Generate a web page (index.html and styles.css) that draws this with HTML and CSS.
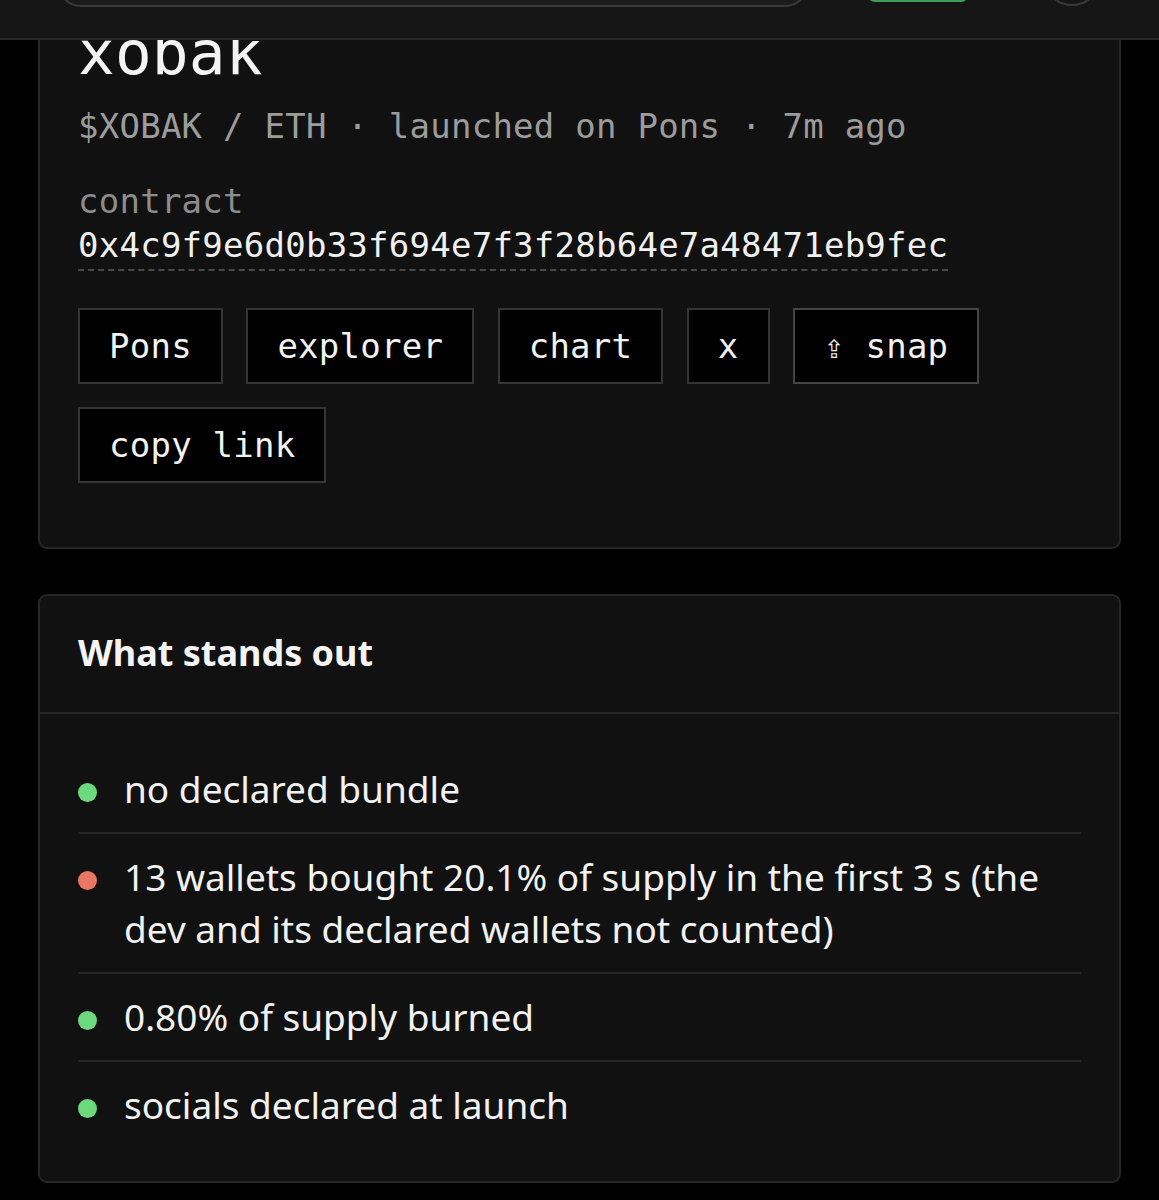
FILE: index.html
```html
<!DOCTYPE html>
<html lang="en">
<head>
<meta charset="utf-8">
<title>xobak</title>
<link rel="stylesheet" href="styles.css">
</head>
<body>
<header class="topbar">
  <div class="topbar-row">
    <div class="search-pill"></div>
    <div class="cta-pill"></div>
    <div class="avatar"></div>
  </div>
</header>

<main class="page">
  <section class="card token-card">
    <h1 class="token-title">xobak</h1>
    <p class="token-meta">$XOBAK / ETH · launched on Pons · 7m ago</p>
    <div class="contract">
      <div class="contract-label">contract</div>
      <div class="contract-addr">0x4c9f9e6d0b33f694e7f3f28b64e7a48471eb9fec</div>
    </div>
    <div class="actions">
      <a class="btn">Pons</a>
      <a class="btn">explorer</a>
      <a class="btn">chart</a>
      <a class="btn">x</a>
      <a class="btn btn-snap">⇪ snap</a>
      <a class="btn">copy link</a>
    </div>
  </section>

  <section class="card notes-card">
    <h2 class="notes-head">What stands out</h2>
    <ul class="notes">
      <li class="note"><span class="dot dot-good"></span><span class="note-text">no declared bundle</span></li>
      <li class="note"><span class="dot dot-bad"></span><span class="note-text">13 wallets bought 20.1% of supply in the first 3 s (the dev and its declared wallets not counted)</span></li>
      <li class="note"><span class="dot dot-good"></span><span class="note-text">0.80% of supply burned</span></li>
      <li class="note"><span class="dot dot-good"></span><span class="note-text">socials declared at launch</span></li>
    </ul>
  </section>
</main>
</body>
</html>
```

FILE: styles.css
```css
* { box-sizing: border-box; }

html, body {
  margin: 0;
  padding: 0;
  background: #000;
}

body {
  color: #f2f2f2;
  font-family: "Noto Sans", "DejaVu Sans", sans-serif;
}

/* ---------- sticky top bar ---------- */
.topbar {
  position: fixed;
  top: 0;
  left: 0;
  right: 0;
  height: 40px;
  background: #161616;
  border-bottom: 2px solid #2a2a2a;
  overflow: hidden;
  z-index: 10;
}

.topbar-row {
  display: flex;
  align-items: flex-end;
  height: 38px;
  padding-left: 57px;
}

.search-pill {
  width: 752px;
  height: 60px;
  margin-bottom: 31px;
  border: 2px solid #3a3a3a;
  border-radius: 24px;
  background: #1b1b1b;
  flex: none;
}

.cta-pill {
  width: 102px;
  height: 40px;
  margin-left: 58px;
  margin-bottom: 36px;
  border: 2px solid #3f9f52;
  border-radius: 8px;
  background: #1f3b25;
  flex: none;
}

.avatar {
  width: 58px;
  height: 58px;
  margin-left: 74px;
  margin-bottom: 32px;
  border: 2px solid #3a3a3a;
  border-radius: 50%;
  background: #161616;
  flex: none;
}

/* ---------- page ---------- */
.page {
  display: flex;
  flex-direction: column;
  gap: 45px;
  padding: 0 38px 40px;
  margin-top: 14px;
}

.card {
  background: #111;
  border: 2px solid #262626;
  border-radius: 9px;
}

/* ---------- token card ---------- */
.token-card {
  padding: 0 38px 64px;
  font-family: "DejaVu Sans Mono", "Liberation Mono", monospace;
}

.token-title {
  margin: 0;
  font-family: "DejaVu Sans Mono", monospace;
  font-weight: 400;
  font-size: 61px;
  line-height: 74px;
  color: #f4f4f4;
  letter-spacing: 0.2px;
}

.token-meta {
  margin: 14px 0 0;
  font-size: 34px;
  line-height: 44px;
  color: #9c9c9c;
  letter-spacing: 0.25px;
}

.contract {
  margin-top: 31px;
}

.contract-label {
  font-size: 34px;
  line-height: 44px;
  color: #8c8c8c;
  letter-spacing: 0.25px;
}

.contract-addr {
  display: inline-block;
  font-size: 34px;
  line-height: 44px;
  color: #f0f0f0;
  letter-spacing: 0.25px;
  padding-bottom: 2px;
  border-bottom: 2px dashed #4a4a4a;
}

.actions {
  display: flex;
  flex-wrap: wrap;
  column-gap: 23.5px;
  row-gap: 23px;
  margin-top: 37px;
}

.btn {
  display: inline-block;
  padding: 17px 29px;
  background: #000;
  border: 2px solid #353535;
  font-size: 34px;
  line-height: 38px;
  color: #f2f2f2;
  letter-spacing: 0.25px;
  white-space: pre;
}

.btn-snap {
  border-color: #444;
}

/* ---------- notes card ---------- */
.notes-card {
  padding: 0;
}

.notes-head {
  margin: 0;
  padding: 32px 38px 34px;
  font-size: 36px;
  line-height: 50px;
  font-weight: 700;
  color: #f4f4f4;
  border-bottom: 2px solid #262626;
}

.notes {
  list-style: none;
  margin: 0;
  padding: 32px 38px 33px;
}

.note {
  display: flex;
  align-items: flex-start;
  gap: 27px;
  padding: 17px 0;
  border-top: 2px solid #262626;
  font-size: 37px;
  line-height: 52px;
  color: #f2f2f2;
}

.note:first-child {
  border-top: none;
}

.dot {
  flex: none;
  width: 19px;
  height: 19px;
  margin-top: 20px;
  border-radius: 50%;
}

.dot-good { background: #6bd97c; }
.dot-bad { background: #ea7666; }

.note-text {
  flex: 1;
}
```
